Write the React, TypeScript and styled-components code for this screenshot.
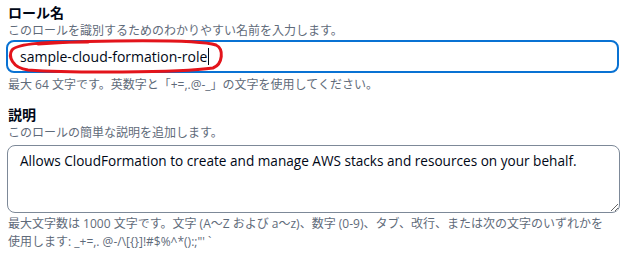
import React from 'react';
import styled, { createGlobalStyle } from 'styled-components';

const GlobalStyle = createGlobalStyle`
    body {
        margin: 0;
        background: #ffffff;
        font-family: "Open Sans", "Noto Sans CJK JP", sans-serif;
    }
`;

const Page = styled.div`
    box-sizing: border-box;
    width: 629px;
    height: 257px;
    padding: 3px 10px 0 6px;
    display: flex;
    flex-direction: column;
    overflow: hidden;
`;

const Field = styled.div<{ $top?: number }>`
    display: flex;
    flex-direction: column;
    margin-top: ${p => p.$top ?? 0}px;
`;

const Label = styled.div`
    padding-left: 2px;
    font-family: "Noto Sans CJK JP", sans-serif;
    font-size: 14px;
    font-weight: 700;
    line-height: 19px;
    color: #000716;
`;

const Desc = styled.div`
    padding-left: 2px;
    font-family: "Open Sans", "Noto Sans CJK JP", sans-serif;
    font-size: 12px;
    line-height: 17px;
    color: #5f6b7a;
`;

const Hint = styled(Desc)<{ $top?: number }>`
    margin-top: ${p => p.$top ?? 4}px;
    max-width: 603px;
    line-height: 18px;
`;

const InputWrap = styled.div`
    position: relative;
    margin-top: 1px;
`;

const Input = styled.div`
    box-sizing: border-box;
    height: 33px;
    border: 2px solid #0972d3;
    border-radius: 8px;
    padding: 0 0 0 12px;
    display: flex;
    align-items: center;
    font-size: 14px;
    color: #000716;
`;

const Caret = styled.span`
    display: inline-block;
    width: 1px;
    height: 17px;
    background: #000716;
    margin-left: 1px;
`;

const Scribble = styled.svg`
    position: absolute;
    left: 2px;
    top: 0;
    overflow: visible;
    pointer-events: none;
`;

const TextArea = styled.textarea`
    box-sizing: border-box;
    display: block;
    width: 613px;
    height: 68px;
    margin: 4px 0 0 1px;
    border: 1px solid #7d8998;
    border-radius: 8px;
    padding: 5px 12px;
    font-family: "Open Sans", sans-serif;
    font-size: 13.6px;
    line-height: 20px;
    color: #000716;
    outline: none;
    resize: vertical;
`;

export default function App() {
    return (
        <Page>
            <GlobalStyle />
            <Field>
                <Label>ロール名</Label>
                <Desc>このロールを識別するためのわかりやすい名前を入力します。</Desc>
                <InputWrap>
                    <Input>
                        sample-cloud-formation-role<Caret />
                    </Input>
                    <Scribble width="216" height="34" viewBox="0 0 216 34">
                        <path
                            d="M 30 4 C 90 0, 190 -1, 208 5 C 216 9, 215 24, 205 28 C 170 33, 60 33, 20 30 C 4 28, 0 16, 4 10 C 10 3, 40 2, 80 2"
                            fill="none"
                            stroke="#e3141b"
                            strokeWidth="3"
                            strokeLinecap="round"
                        />
                    </Scribble>
                </InputWrap>
                <Hint $top={3}>最大 64 文字です。英数字と「+=,.@-_」の文字を使用してください。</Hint>
            </Field>
            <Field $top={11}>
                <Label>説明</Label>
                <Desc>このロールの簡単な説明を追加します。</Desc>
                <TextArea
                    readOnly
                    value="Allows CloudFormation to create and manage AWS stacks and resources on your behalf."
                />
                <Hint $top={2}>
                    最大文字数は 1000 文字です。文字 (A～Z および a～z)、数字 (0-9)、タブ、改行、または次の文字のいずれかを使用します: _+=,. @-/\[{'{}'}]!#$%^*():;"' `
                </Hint>
            </Field>
        </Page>
    );
}
